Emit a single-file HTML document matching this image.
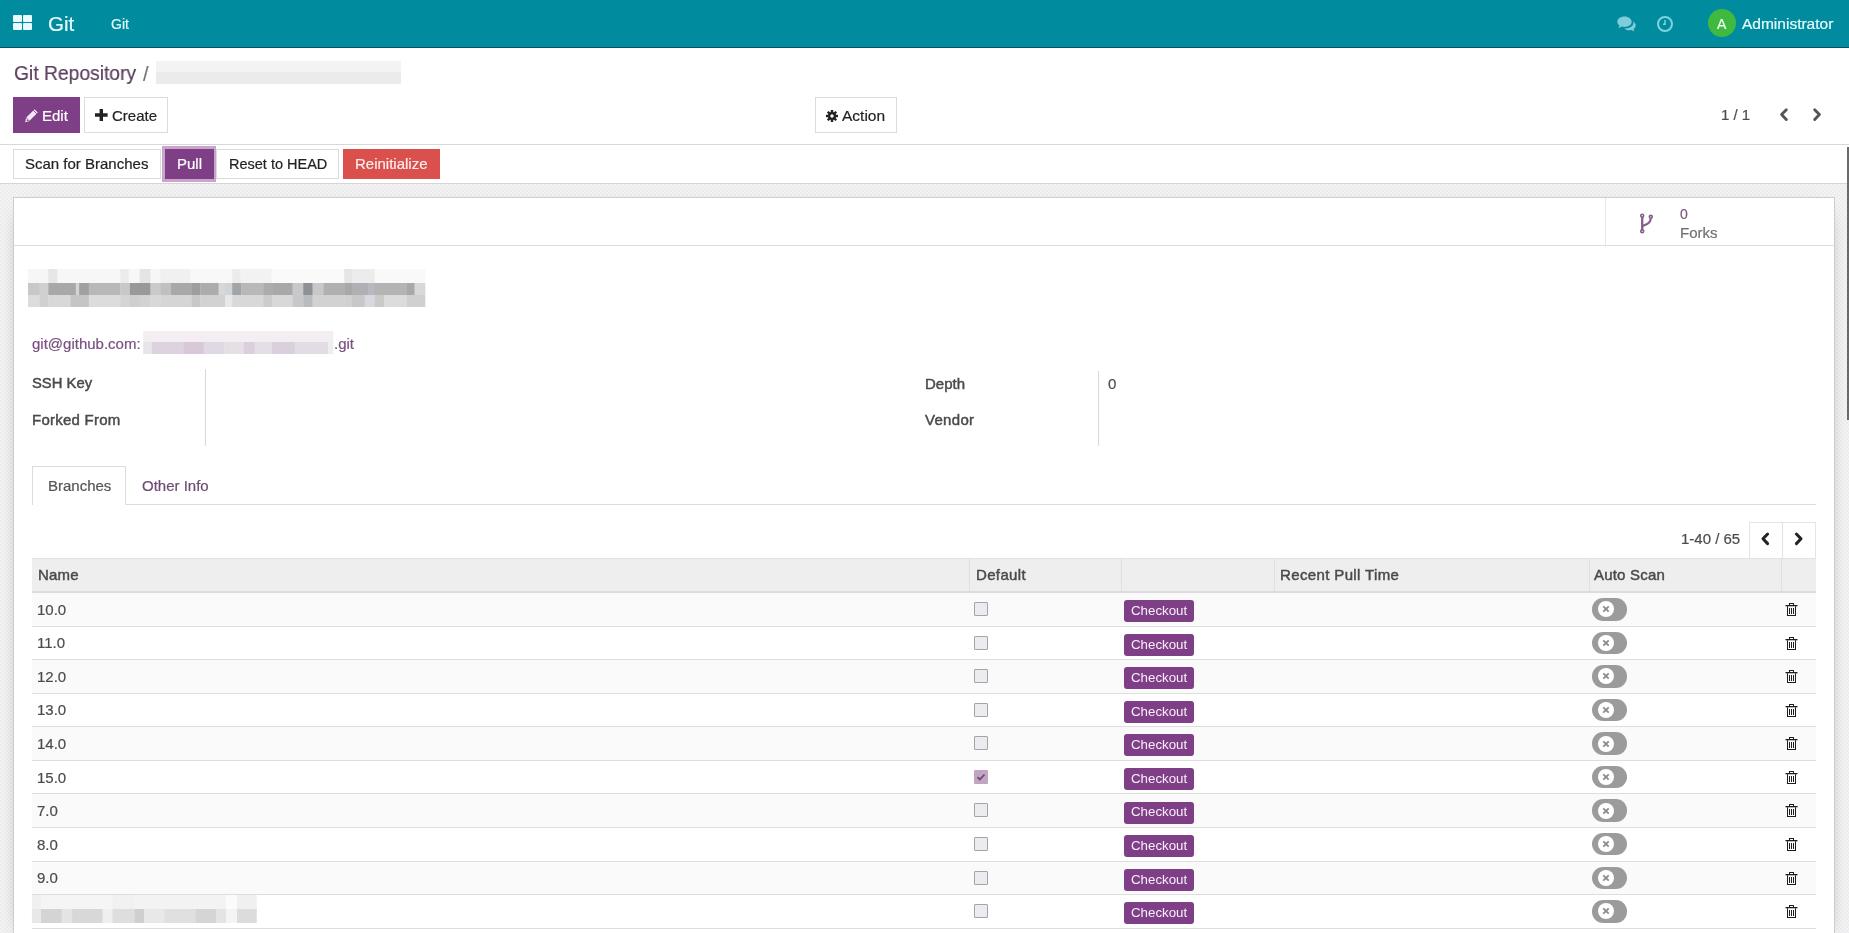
<!DOCTYPE html>
<html><head><meta charset="utf-8"><title>Git Repository</title>
<style>
html,body{margin:0;padding:0;width:1849px;height:933px;overflow:hidden;background:#fff;font-family:"Liberation Sans", sans-serif}
.t{position:absolute;white-space:nowrap;line-height:1;will-change:transform;-webkit-text-stroke:0.2px currentColor}
.r{position:absolute}
</style></head><body>
<div class="r" style="left:0px;top:0px;width:1849px;height:47px;background:#018b9e"></div>
<div class="r" style="left:0px;top:47px;width:1849px;height:1px;background:#05525e"></div>
<div class="r" style="left:13px;top:15px;width:8.5px;height:7px;background:#e9fbfd;border-radius:1px"></div>
<div class="r" style="left:23px;top:15px;width:8.5px;height:7px;background:#e9fbfd;border-radius:1px"></div>
<div class="r" style="left:13px;top:23px;width:8.5px;height:7px;background:#e9fbfd;border-radius:1px"></div>
<div class="r" style="left:23px;top:23px;width:8.5px;height:7px;background:#e9fbfd;border-radius:1px"></div>
<div class="t" style="left:48.20px;top:13.55px;font-size:20.5px;color:#e6fbfd;font-weight:400;">Git</div>
<div class="t" style="left:110.70px;top:16.95px;font-size:14px;color:#dff7fa;font-weight:400;">Git</div>
<svg class="r" style="left:1616px;top:15px" width="22" height="18" viewBox="0 0 22 18">
<path d="M8.5 1.5C4.4 1.5 1.3 3.9 1.3 6.8c0 1.5 0.8 2.8 2.1 3.8L2.6 13.2l3.2-1.6c0.9 0.3 1.8 0.4 2.7 0.4 4.1 0 7.2-2.4 7.2-5.2S12.6 1.5 8.5 1.5z" fill="#7fcdd8"/>
<path d="M17.2 6.2c0.2 0.4 0.3 0.9 0.3 1.4 0 3.3-3.6 5.9-8 5.9-0.4 0-0.8 0-1.2-0.1 1.2 1.1 3 1.8 5 1.8 0.8 0 1.5-0.1 2.2-0.3l2.8 1.5-0.7-2.4c1.3-0.9 2.1-2.2 2.1-3.6 0-1.6-1-3.1-2.5-4.2z" fill="#7fcdd8"/>
</svg>
<svg class="r" style="left:1656px;top:15px" width="18" height="18" viewBox="0 0 18 18">
<circle cx="9" cy="9" r="7" fill="none" stroke="#7fd3dd" stroke-width="2"/>
<path d="M9 5v4.2h-2" fill="none" stroke="#7fd3dd" stroke-width="1.5"/>
</svg>
<div class="r" style="left:1708px;top:9px;width:28px;height:28px;background:#3fb93f;border-radius:50%"></div>
<div class="t" style="left:1717.30px;top:16.75px;font-size:14px;color:#f0fff0;font-weight:400;">A</div>
<div class="t" style="left:1742.30px;top:16.08px;font-size:15.5px;color:#e6fbfd;font-weight:400;">Administrator</div>
<div class="t" style="left:13.60px;top:63.33px;font-size:20.4px;color:#5a3d5c;font-weight:400;transform:scaleX(0.945);transform-origin:0 0">Git Repository</div>
<div class="t" style="left:143.00px;top:63.67px;font-size:20px;color:#777;font-weight:400;">/</div>
<div class="r" style="left:156px;top:61px;width:245px;height:11px;background:#f3f3f4"></div>
<div class="r" style="left:156px;top:72px;width:245px;height:12px;background:#ebebec"></div>
<div class="r" style="left:13px;top:97px;width:67px;height:36px;background:#7f3f86"></div>
<svg class="r" style="left:24px;top:108px" width="15" height="15" viewBox="0 0 15 15">
<path d="M10.6 1.2l3.2 3.2-8.3 8.3-3.2-3.2z" fill="#f3e8f5"/><path d="M2 10.1l3.1 3.1-3.9 1z" fill="#f3e8f5"/>
<path d="M9.2 2.2l3.6 3.6" stroke="#7f3f86" stroke-width="0.9"/><circle cx="3.4" cy="12.6" r="0.7" fill="#6a4070"/>
</svg>
<div class="t" style="left:42.20px;top:108.10px;font-size:15px;color:#ffffff;font-weight:400;">Edit</div>
<div class="r" style="left:84px;top:97px;width:84px;height:36px;background:#fff;border:1px solid #dcdcdc;box-sizing:border-box"></div>
<svg class="r" style="left:95px;top:109px" width="13" height="12" viewBox="0 0 13 12">
<path d="M4.6 0h3.4v4.3h4.6v3.4h-4.6v4.3h-3.4v-4.3h-4.6v-3.4h4.6z" fill="#222"/>
</svg>
<div class="t" style="left:112.00px;top:108.10px;font-size:15px;color:#222;font-weight:400;">Create</div>
<div class="r" style="left:815px;top:97px;width:82px;height:36px;background:#fff;border:1px solid #dcdcdc;box-sizing:border-box"></div>
<svg class="r" style="left:826px;top:110px" width="12" height="12" viewBox="0 0 12 12">
<g fill="#222"><circle cx="6" cy="6" r="4"/>
<rect x="4.8" y="0" width="2.4" height="12"/><rect x="0" y="4.8" width="12" height="2.4"/>
<rect x="4.8" y="0" width="2.4" height="12" transform="rotate(45 6 6)"/><rect x="4.8" y="0" width="2.4" height="12" transform="rotate(-45 6 6)"/></g>
<circle cx="6" cy="6" r="1.7" fill="#fff"/>
</svg>
<div class="t" style="left:841.50px;top:108.28px;font-size:15.5px;color:#222;font-weight:400;">Action</div>
<div class="t" style="left:1721.00px;top:107.30px;font-size:15px;color:#4c4c4c;font-weight:400;">1 / 1</div>
<svg class="r" style="left:1778px;top:107px" width="12" height="16" viewBox="0 0 12 16">
<path d="M8.3 2.8L3.6 7.6l4.7 4.8" fill="none" stroke="#555" stroke-width="2.9" stroke-linecap="round" stroke-linejoin="round"/></svg>
<svg class="r" style="left:1811px;top:107px" width="12" height="16" viewBox="0 0 12 16">
<path d="M3.7 2.8l4.7 4.8-4.7 4.8" fill="none" stroke="#555" stroke-width="2.9" stroke-linecap="round" stroke-linejoin="round"/></svg>
<div class="r" style="left:0px;top:144px;width:1849px;height:1px;background:#d8d8d8"></div>
<div class="r" style="left:0px;top:183px;width:1849px;height:1px;background:#d6d6d6"></div>
<div class="r" style="left:13px;top:149px;width:148px;height:30px;background:#fff;border:1px solid #dcdcdc;box-sizing:border-box"></div>
<div class="t" style="left:24.90px;top:156.20px;font-size:15px;color:#222;font-weight:400;">Scan for Branches</div>
<div class="r" style="left:162px;top:146px;width:54px;height:36px;background:#c9a5cc"></div>
<div class="r" style="left:165px;top:149px;width:49px;height:30px;background:#7f3f86"></div>
<div class="t" style="left:176.50px;top:156.20px;font-size:15px;color:#fff;font-weight:400;">Pull</div>
<div class="r" style="left:216px;top:149px;width:123px;height:30px;background:#fff;border:1px solid #dcdcdc;box-sizing:border-box"></div>
<div class="t" style="left:228.90px;top:156.63px;font-size:14.5px;color:#222;font-weight:400;">Reset to HEAD</div>
<div class="r" style="left:343px;top:149px;width:97px;height:30px;background:#d9504c"></div>
<div class="t" style="left:355.30px;top:156.20px;font-size:15px;color:#fdeeee;font-weight:400;">Reinitialize</div>
<div class="r" style="left:0px;top:184px;width:1849px;height:749px;background:#f0f0f1;background-image:repeating-conic-gradient(#f4f4f5 0 25%,#ececee 0 50%);background-size:4px 4px"></div>
<div class="r" style="left:13px;top:197px;width:1822px;height:740px;background:#fff;border:1px solid #cdcdcd;box-sizing:border-box;box-shadow:0 5px 20px -15px #000"></div>
<div class="r" style="left:1847px;top:147px;width:2px;height:273px;background:#6a6a6a"></div>
<div class="r" style="left:14px;top:245px;width:1820px;height:1px;background:#dedede"></div>
<div class="r" style="left:1605px;top:198px;width:1px;height:47px;background:#e6e6e6"></div>
<svg class="r" style="left:1638px;top:212px" width="17" height="23" viewBox="0 0 17 23">
<g fill="none" stroke="#845f88"><circle cx="4.2" cy="3.7" r="1.45" stroke-width="1.6"/><circle cx="12.8" cy="4.8" r="1.45" stroke-width="1.6"/><circle cx="4.2" cy="19.3" r="1.45" stroke-width="1.6"/>
<path d="M4.2 5.2v12.6" stroke-width="2.3"/><path d="M12.8 6.3c0 3-1.6 4.8-4.6 6.2-2 0.9-3.4 1.2-3.8 1.8" stroke-width="2.1"/></g></svg>
<div class="t" style="left:1680.30px;top:206.85px;font-size:14px;color:#7d5a80;font-weight:400;">0</div>
<div class="t" style="left:1680.30px;top:224.90px;font-size:15px;color:#707070;font-weight:400;">Forks</div>
<svg class="r" style="left:28px;top:269px;overflow:visible" width="1" height="1">
<rect x="0.0" y="0" width="20.6" height="14" fill="#f6f6f6"/>
<rect x="20.3" y="0" width="9.4" height="14" fill="#e6e6e6"/>
<rect x="29.4" y="0" width="63.1" height="14" fill="#f7f7f7"/>
<rect x="92.2" y="0" width="8.9" height="14" fill="#ebebeb"/>
<rect x="100.8" y="0" width="11.2" height="14" fill="#f7f7f7"/>
<rect x="111.7" y="0" width="11.1" height="14" fill="#e4e4e4"/>
<rect x="122.5" y="0" width="10.0" height="14" fill="#f6f6f6"/>
<rect x="132.2" y="0" width="30.6" height="14" fill="#f0f0f0"/>
<rect x="162.5" y="0" width="42.0" height="14" fill="#f8f8f8"/>
<rect x="204.2" y="0" width="8.6" height="14" fill="#ececec"/>
<rect x="212.5" y="0" width="31.4" height="14" fill="#f2f2f2"/>
<rect x="243.6" y="0" width="72.9" height="14" fill="#fafafa"/>
<rect x="316.2" y="0" width="8.1" height="14" fill="#e5e5e5"/>
<rect x="324.0" y="0" width="23.0" height="14" fill="#ececec"/>
<rect x="346.7" y="0" width="50.6" height="14" fill="#f9f9f9"/>
<rect x="0.0" y="14" width="11.9" height="12" fill="#c8c8c8"/>
<rect x="11.6" y="14" width="9.0" height="12" fill="#d0d0d0"/>
<rect x="20.3" y="14" width="27.8" height="12" fill="#a8a8a8"/>
<rect x="47.8" y="14" width="3.6" height="12" fill="#d5d5d5"/>
<rect x="51.1" y="14" width="10.0" height="12" fill="#a0a0a0"/>
<rect x="60.8" y="14" width="31.7" height="12" fill="#b8b8b8"/>
<rect x="92.2" y="14" width="10.0" height="12" fill="#c8c8c8"/>
<rect x="101.9" y="14" width="20.9" height="12" fill="#999999"/>
<rect x="122.5" y="14" width="10.0" height="12" fill="#c8cacc"/>
<rect x="132.2" y="14" width="11.1" height="12" fill="#c0c0c0"/>
<rect x="143.0" y="14" width="20.9" height="12" fill="#a8a8a8"/>
<rect x="163.6" y="14" width="8.9" height="12" fill="#9e9e9e"/>
<rect x="172.2" y="14" width="18.7" height="12" fill="#acacac"/>
<rect x="190.6" y="14" width="6.7" height="12" fill="#d8d8d8"/>
<rect x="197.0" y="14" width="7.5" height="12" fill="#d0d4d6"/>
<rect x="204.2" y="14" width="9.2" height="12" fill="#a2a4a6"/>
<rect x="213.1" y="14" width="22.4" height="12" fill="#b8b8b8"/>
<rect x="235.2" y="14" width="9.2" height="12" fill="#acacac"/>
<rect x="244.1" y="14" width="20.8" height="12" fill="#a8a8a8"/>
<rect x="264.6" y="14" width="10.9" height="12" fill="#c8c8cc"/>
<rect x="275.2" y="14" width="9.7" height="12" fill="#8e9296"/>
<rect x="284.6" y="14" width="11.4" height="12" fill="#c8c8c8"/>
<rect x="295.7" y="14" width="20.8" height="12" fill="#b0b0b0"/>
<rect x="316.2" y="14" width="8.1" height="12" fill="#a8a8a8"/>
<rect x="324.0" y="14" width="16.3" height="12" fill="#b0b0b4"/>
<rect x="340.0" y="14" width="7.0" height="12" fill="#b8b8c0"/>
<rect x="346.7" y="14" width="32.4" height="12" fill="#b4b4b4"/>
<rect x="378.8" y="14" width="8.1" height="12" fill="#a8a8a8"/>
<rect x="386.6" y="14" width="10.7" height="12" fill="#d8d8d8"/>
<rect x="0.0" y="26" width="11.9" height="12" fill="#dcdcdc"/>
<rect x="11.6" y="26" width="9.0" height="12" fill="#d0d0d0"/>
<rect x="20.3" y="26" width="22.4" height="12" fill="#d8d8d8"/>
<rect x="42.4" y="26" width="18.7" height="12" fill="#c5c5c5"/>
<rect x="60.8" y="26" width="31.7" height="12" fill="#dcdcdc"/>
<rect x="92.2" y="26" width="10.0" height="12" fill="#d4d4d4"/>
<rect x="101.9" y="26" width="10.1" height="12" fill="#cfcfcf"/>
<rect x="111.7" y="26" width="11.1" height="12" fill="#d2d2d2"/>
<rect x="122.5" y="26" width="10.0" height="12" fill="#d8d8d8"/>
<rect x="132.2" y="26" width="31.7" height="12" fill="#d5d5d5"/>
<rect x="163.6" y="26" width="8.9" height="12" fill="#c8c8c8"/>
<rect x="172.2" y="26" width="25.1" height="12" fill="#d2d2d2"/>
<rect x="197.0" y="26" width="7.5" height="12" fill="#e8e8e8"/>
<rect x="204.2" y="26" width="31.3" height="12" fill="#d8d8d8"/>
<rect x="235.2" y="26" width="9.2" height="12" fill="#cccccc"/>
<rect x="244.1" y="26" width="20.8" height="12" fill="#d8d8d8"/>
<rect x="264.6" y="26" width="10.9" height="12" fill="#c8c8c8"/>
<rect x="275.2" y="26" width="9.7" height="12" fill="#b8bcc0"/>
<rect x="284.6" y="26" width="31.9" height="12" fill="#d2d2d2"/>
<rect x="316.2" y="26" width="8.1" height="12" fill="#d0d0d0"/>
<rect x="324.0" y="26" width="13.0" height="12" fill="#c8c8c8"/>
<rect x="336.7" y="26" width="10.3" height="12" fill="#d8d8e0"/>
<rect x="346.7" y="26" width="9.7" height="12" fill="#cacaca"/>
<rect x="356.1" y="26" width="23.0" height="12" fill="#dcdcdc"/>
<rect x="378.8" y="26" width="18.5" height="12" fill="#d0d0d0"/>
</svg>
<div class="t" style="left:32.20px;top:335.90px;font-size:15px;color:#7a5080;font-weight:400;">git@github.com:</div>
<svg class="r" style="left:143px;top:331px;overflow:visible" width="1" height="1">
<rect x="0.2" y="0" width="190.1" height="11" fill="#f2eef2"/>
<rect x="0.2" y="11" width="9.0" height="12" fill="#e8e4e8"/>
<rect x="8.9" y="11" width="32.2" height="12" fill="#ddd3df"/>
<rect x="40.8" y="11" width="20.3" height="12" fill="#d8c8d8"/>
<rect x="60.8" y="11" width="20.9" height="12" fill="#e0d8e2"/>
<rect x="81.4" y="11" width="19.7" height="12" fill="#e6e0e6"/>
<rect x="100.8" y="11" width="11.2" height="12" fill="#dccfdd"/>
<rect x="111.7" y="11" width="17.6" height="12" fill="#e4dee6"/>
<rect x="129.0" y="11" width="23.0" height="12" fill="#dacfdc"/>
<rect x="151.7" y="11" width="33.8" height="12" fill="#e2dce4"/>
<rect x="185.2" y="11" width="5.1" height="12" fill="#eeeeee"/>
</svg>
<div class="t" style="left:333.50px;top:335.90px;font-size:15px;color:#7a5080;font-weight:400;">.git</div>
<div class="t" style="left:32.20px;top:376.37px;font-size:14.8px;color:#4a4a4a;font-weight:400;-webkit-text-stroke:0.45px currentColor;">SSH Key</div>
<div class="t" style="left:32.20px;top:412.20px;font-size:15px;color:#4a4a4a;font-weight:400;-webkit-text-stroke:0.45px currentColor;letter-spacing:0.25px">Forked From</div>
<div class="r" style="left:205px;top:369px;width:1px;height:77px;background:#d9d9d9"></div>
<div class="t" style="left:924.50px;top:376.10px;font-size:15px;color:#4a4a4a;font-weight:400;-webkit-text-stroke:0.45px currentColor;">Depth</div>
<div class="t" style="left:924.50px;top:412.20px;font-size:15px;color:#4a4a4a;font-weight:400;-webkit-text-stroke:0.45px currentColor;letter-spacing:0.3px">Vendor</div>
<div class="r" style="left:1098px;top:371px;width:1px;height:75px;background:#d9d9d9"></div>
<div class="t" style="left:1107.50px;top:376.10px;font-size:15px;color:#4c4c4c;font-weight:400;">0</div>
<div class="r" style="left:32px;top:504px;width:1784px;height:1px;background:#dcdcdc"></div>
<div class="r" style="left:32px;top:466px;width:94px;height:39px;background:#fff;border:1px solid #dcdcdc;border-bottom:none;box-sizing:border-box"></div>
<div class="t" style="left:47.60px;top:478.00px;font-size:15px;color:#555;font-weight:400;">Branches</div>
<div class="t" style="left:141.60px;top:478.00px;font-size:15px;color:#6e4a72;font-weight:400;">Other Info</div>
<div class="t" style="left:1681.00px;top:531.40px;font-size:15px;color:#4c4c4c;font-weight:400;">1-40 / 65</div>
<div class="r" style="left:1749px;top:522px;width:67px;height:36px;background:#fff;border:1px solid #e4e4e4;border-bottom:none;box-sizing:border-box"></div>
<div class="r" style="left:1782px;top:522px;width:1px;height:36px;background:#e2e2e2"></div>
<svg class="r" style="left:1758px;top:531px" width="14" height="16" viewBox="0 0 14 16">
<path d="M9.6 3L5 7.8l4.6 4.8" fill="none" stroke="#222" stroke-width="3" stroke-linecap="round" stroke-linejoin="round"/></svg>
<svg class="r" style="left:1792px;top:531px" width="14" height="16" viewBox="0 0 14 16">
<path d="M4.4 3L9 7.8l-4.6 4.8" fill="none" stroke="#222" stroke-width="3" stroke-linecap="round" stroke-linejoin="round"/></svg>
<div class="r" style="left:32px;top:558px;width:1784px;height:33px;background:#eeeeee"></div>
<div class="r" style="left:32px;top:557.5px;width:1784px;height:1px;background:#e2e2e2"></div>
<div class="r" style="left:32px;top:591px;width:1784px;height:2px;background:#dcdcdc"></div>
<div class="r" style="left:968.5px;top:558px;width:1px;height:33px;background:#e0e0e0"></div>
<div class="r" style="left:1120.5px;top:558px;width:1px;height:33px;background:#e0e0e0"></div>
<div class="r" style="left:1273.5px;top:558px;width:1px;height:33px;background:#e0e0e0"></div>
<div class="r" style="left:1588.5px;top:558px;width:1px;height:33px;background:#e0e0e0"></div>
<div class="r" style="left:1781px;top:558px;width:1px;height:33px;background:#e0e0e0"></div>
<div class="t" style="left:38.00px;top:567.30px;font-size:15px;color:#4a4a4a;font-weight:400;-webkit-text-stroke:0.45px currentColor;letter-spacing:0.2px">Name</div>
<div class="t" style="left:975.60px;top:567.30px;font-size:15px;color:#4a4a4a;font-weight:400;-webkit-text-stroke:0.45px currentColor;letter-spacing:0.35px">Default</div>
<div class="t" style="left:1279.90px;top:567.30px;font-size:15px;color:#4a4a4a;font-weight:400;-webkit-text-stroke:0.45px currentColor;letter-spacing:0.37px">Recent Pull Time</div>
<div class="t" style="left:1593.80px;top:567.30px;font-size:15px;color:#4a4a4a;font-weight:400;-webkit-text-stroke:0.45px currentColor;letter-spacing:0.2px">Auto Scan</div>
<div class="r" style="left:32px;top:593.0px;width:1784px;height:32.57px;background:#fafafa"></div>
<div class="r" style="left:32px;top:625.57px;width:1784px;height:1px;background:#dedede"></div>
<div class="t" style="left:37.40px;top:601.70px;font-size:15px;color:#4c4c4c;font-weight:400;">10.0</div>
<div class="r" style="left:974px;top:602.0px;width:14px;height:14px;background:#ebebf0;border:1px solid #a4a4a8;box-sizing:border-box;border-radius:1px"></div>
<div class="r" style="left:1124px;top:600.2px;width:70px;height:22px;background:#7f3f86;border-radius:3px"></div>
<div class="t" style="left:1130.80px;top:604.04px;font-size:13.3px;color:#fbeefc;font-weight:400;-webkit-text-stroke:0">Checkout</div>
<div class="r" style="left:1592px;top:598.0px;width:35px;height:22.5px;background:#9b9b9b;border-radius:11.25px"></div>
<div class="r" style="left:1598.2px;top:601.3px;width:16px;height:16px;background:#fff;border-radius:50%"></div>
<svg class="r" style="left:1601.2px;top:604.30px" width="10" height="10" viewBox="0 0 10 10"><path d="M2.3 2.3l5.4 5.4M7.7 2.3l-5.4 5.4" stroke="#8c8c8c" stroke-width="1.9"/></svg>
<svg class="r" style="left:1785px;top:603px" width="13" height="13" viewBox="0 0 13 13">
<g fill="#1e1e1e"><rect x="4" y="0" width="5" height="1"/><rect x="4" y="0" width="1" height="2"/><rect x="8" y="0" width="1" height="2"/>
<rect x="0.5" y="2" width="12" height="1.3"/>
<rect x="2" y="3.3" width="1" height="9.7"/><rect x="10" y="3.3" width="1" height="9.7"/><rect x="2" y="12" width="9" height="1"/>
<rect x="4" y="5" width="1" height="6"/><rect x="6" y="5" width="1" height="6"/><rect x="8" y="5" width="1" height="6"/></g></svg>
<div class="r" style="left:32px;top:626.57px;width:1784px;height:32.57px;background:#ffffff"></div>
<div class="r" style="left:32px;top:659.14px;width:1784px;height:1px;background:#dedede"></div>
<div class="t" style="left:37.40px;top:635.27px;font-size:15px;color:#4c4c4c;font-weight:400;">11.0</div>
<div class="r" style="left:974px;top:635.57px;width:14px;height:14px;background:#ebebf0;border:1px solid #a4a4a8;box-sizing:border-box;border-radius:1px"></div>
<div class="r" style="left:1124px;top:633.77px;width:70px;height:22px;background:#7f3f86;border-radius:3px"></div>
<div class="t" style="left:1130.80px;top:637.61px;font-size:13.3px;color:#fbeefc;font-weight:400;-webkit-text-stroke:0">Checkout</div>
<div class="r" style="left:1592px;top:631.57px;width:35px;height:22.5px;background:#9b9b9b;border-radius:11.25px"></div>
<div class="r" style="left:1598.2px;top:634.87px;width:16px;height:16px;background:#fff;border-radius:50%"></div>
<svg class="r" style="left:1601.2px;top:637.87px" width="10" height="10" viewBox="0 0 10 10"><path d="M2.3 2.3l5.4 5.4M7.7 2.3l-5.4 5.4" stroke="#8c8c8c" stroke-width="1.9"/></svg>
<svg class="r" style="left:1785px;top:637px" width="13" height="13" viewBox="0 0 13 13">
<g fill="#1e1e1e"><rect x="4" y="0" width="5" height="1"/><rect x="4" y="0" width="1" height="2"/><rect x="8" y="0" width="1" height="2"/>
<rect x="0.5" y="2" width="12" height="1.3"/>
<rect x="2" y="3.3" width="1" height="9.7"/><rect x="10" y="3.3" width="1" height="9.7"/><rect x="2" y="12" width="9" height="1"/>
<rect x="4" y="5" width="1" height="6"/><rect x="6" y="5" width="1" height="6"/><rect x="8" y="5" width="1" height="6"/></g></svg>
<div class="r" style="left:32px;top:660.14px;width:1784px;height:32.57px;background:#fafafa"></div>
<div class="r" style="left:32px;top:692.71px;width:1784px;height:1px;background:#dedede"></div>
<div class="t" style="left:37.40px;top:668.84px;font-size:15px;color:#4c4c4c;font-weight:400;">12.0</div>
<div class="r" style="left:974px;top:669.14px;width:14px;height:14px;background:#ebebf0;border:1px solid #a4a4a8;box-sizing:border-box;border-radius:1px"></div>
<div class="r" style="left:1124px;top:667.34px;width:70px;height:22px;background:#7f3f86;border-radius:3px"></div>
<div class="t" style="left:1130.80px;top:671.18px;font-size:13.3px;color:#fbeefc;font-weight:400;-webkit-text-stroke:0">Checkout</div>
<div class="r" style="left:1592px;top:665.14px;width:35px;height:22.5px;background:#9b9b9b;border-radius:11.25px"></div>
<div class="r" style="left:1598.2px;top:668.44px;width:16px;height:16px;background:#fff;border-radius:50%"></div>
<svg class="r" style="left:1601.2px;top:671.44px" width="10" height="10" viewBox="0 0 10 10"><path d="M2.3 2.3l5.4 5.4M7.7 2.3l-5.4 5.4" stroke="#8c8c8c" stroke-width="1.9"/></svg>
<svg class="r" style="left:1785px;top:670px" width="13" height="13" viewBox="0 0 13 13">
<g fill="#1e1e1e"><rect x="4" y="0" width="5" height="1"/><rect x="4" y="0" width="1" height="2"/><rect x="8" y="0" width="1" height="2"/>
<rect x="0.5" y="2" width="12" height="1.3"/>
<rect x="2" y="3.3" width="1" height="9.7"/><rect x="10" y="3.3" width="1" height="9.7"/><rect x="2" y="12" width="9" height="1"/>
<rect x="4" y="5" width="1" height="6"/><rect x="6" y="5" width="1" height="6"/><rect x="8" y="5" width="1" height="6"/></g></svg>
<div class="r" style="left:32px;top:693.71px;width:1784px;height:32.57px;background:#ffffff"></div>
<div class="r" style="left:32px;top:726.28px;width:1784px;height:1px;background:#dedede"></div>
<div class="t" style="left:37.40px;top:702.41px;font-size:15px;color:#4c4c4c;font-weight:400;">13.0</div>
<div class="r" style="left:974px;top:702.71px;width:14px;height:14px;background:#ebebf0;border:1px solid #a4a4a8;box-sizing:border-box;border-radius:1px"></div>
<div class="r" style="left:1124px;top:700.91px;width:70px;height:22px;background:#7f3f86;border-radius:3px"></div>
<div class="t" style="left:1130.80px;top:704.75px;font-size:13.3px;color:#fbeefc;font-weight:400;-webkit-text-stroke:0">Checkout</div>
<div class="r" style="left:1592px;top:698.71px;width:35px;height:22.5px;background:#9b9b9b;border-radius:11.25px"></div>
<div class="r" style="left:1598.2px;top:702.01px;width:16px;height:16px;background:#fff;border-radius:50%"></div>
<svg class="r" style="left:1601.2px;top:705.01px" width="10" height="10" viewBox="0 0 10 10"><path d="M2.3 2.3l5.4 5.4M7.7 2.3l-5.4 5.4" stroke="#8c8c8c" stroke-width="1.9"/></svg>
<svg class="r" style="left:1785px;top:704px" width="13" height="13" viewBox="0 0 13 13">
<g fill="#1e1e1e"><rect x="4" y="0" width="5" height="1"/><rect x="4" y="0" width="1" height="2"/><rect x="8" y="0" width="1" height="2"/>
<rect x="0.5" y="2" width="12" height="1.3"/>
<rect x="2" y="3.3" width="1" height="9.7"/><rect x="10" y="3.3" width="1" height="9.7"/><rect x="2" y="12" width="9" height="1"/>
<rect x="4" y="5" width="1" height="6"/><rect x="6" y="5" width="1" height="6"/><rect x="8" y="5" width="1" height="6"/></g></svg>
<div class="r" style="left:32px;top:727.28px;width:1784px;height:32.57px;background:#fafafa"></div>
<div class="r" style="left:32px;top:759.85px;width:1784px;height:1px;background:#dedede"></div>
<div class="t" style="left:37.40px;top:735.98px;font-size:15px;color:#4c4c4c;font-weight:400;">14.0</div>
<div class="r" style="left:974px;top:736.28px;width:14px;height:14px;background:#ebebf0;border:1px solid #a4a4a8;box-sizing:border-box;border-radius:1px"></div>
<div class="r" style="left:1124px;top:734.48px;width:70px;height:22px;background:#7f3f86;border-radius:3px"></div>
<div class="t" style="left:1130.80px;top:738.32px;font-size:13.3px;color:#fbeefc;font-weight:400;-webkit-text-stroke:0">Checkout</div>
<div class="r" style="left:1592px;top:732.28px;width:35px;height:22.5px;background:#9b9b9b;border-radius:11.25px"></div>
<div class="r" style="left:1598.2px;top:735.58px;width:16px;height:16px;background:#fff;border-radius:50%"></div>
<svg class="r" style="left:1601.2px;top:738.58px" width="10" height="10" viewBox="0 0 10 10"><path d="M2.3 2.3l5.4 5.4M7.7 2.3l-5.4 5.4" stroke="#8c8c8c" stroke-width="1.9"/></svg>
<svg class="r" style="left:1785px;top:737px" width="13" height="13" viewBox="0 0 13 13">
<g fill="#1e1e1e"><rect x="4" y="0" width="5" height="1"/><rect x="4" y="0" width="1" height="2"/><rect x="8" y="0" width="1" height="2"/>
<rect x="0.5" y="2" width="12" height="1.3"/>
<rect x="2" y="3.3" width="1" height="9.7"/><rect x="10" y="3.3" width="1" height="9.7"/><rect x="2" y="12" width="9" height="1"/>
<rect x="4" y="5" width="1" height="6"/><rect x="6" y="5" width="1" height="6"/><rect x="8" y="5" width="1" height="6"/></g></svg>
<div class="r" style="left:32px;top:760.85px;width:1784px;height:32.57px;background:#ffffff"></div>
<div class="r" style="left:32px;top:793.42px;width:1784px;height:1px;background:#dedede"></div>
<div class="t" style="left:37.40px;top:769.55px;font-size:15px;color:#4c4c4c;font-weight:400;">15.0</div>
<div class="r" style="left:974px;top:769.85px;width:14px;height:14px;background:#c2a4c5;border-radius:1px"></div>
<svg class="r" style="left:976px;top:771.85px" width="10" height="10" viewBox="0 0 10 10"><path d="M1.5 5.2l2.3 2.3 4.7-5" fill="none" stroke="#6b4a6e" stroke-width="1.8"/></svg>
<div class="r" style="left:1124px;top:768.05px;width:70px;height:22px;background:#7f3f86;border-radius:3px"></div>
<div class="t" style="left:1130.80px;top:771.89px;font-size:13.3px;color:#fbeefc;font-weight:400;-webkit-text-stroke:0">Checkout</div>
<div class="r" style="left:1592px;top:765.85px;width:35px;height:22.5px;background:#9b9b9b;border-radius:11.25px"></div>
<div class="r" style="left:1598.2px;top:769.15px;width:16px;height:16px;background:#fff;border-radius:50%"></div>
<svg class="r" style="left:1601.2px;top:772.15px" width="10" height="10" viewBox="0 0 10 10"><path d="M2.3 2.3l5.4 5.4M7.7 2.3l-5.4 5.4" stroke="#8c8c8c" stroke-width="1.9"/></svg>
<svg class="r" style="left:1785px;top:771px" width="13" height="13" viewBox="0 0 13 13">
<g fill="#1e1e1e"><rect x="4" y="0" width="5" height="1"/><rect x="4" y="0" width="1" height="2"/><rect x="8" y="0" width="1" height="2"/>
<rect x="0.5" y="2" width="12" height="1.3"/>
<rect x="2" y="3.3" width="1" height="9.7"/><rect x="10" y="3.3" width="1" height="9.7"/><rect x="2" y="12" width="9" height="1"/>
<rect x="4" y="5" width="1" height="6"/><rect x="6" y="5" width="1" height="6"/><rect x="8" y="5" width="1" height="6"/></g></svg>
<div class="r" style="left:32px;top:794.42px;width:1784px;height:32.57px;background:#fafafa"></div>
<div class="r" style="left:32px;top:826.99px;width:1784px;height:1px;background:#dedede"></div>
<div class="t" style="left:37.40px;top:803.12px;font-size:15px;color:#4c4c4c;font-weight:400;">7.0</div>
<div class="r" style="left:974px;top:803.42px;width:14px;height:14px;background:#ebebf0;border:1px solid #a4a4a8;box-sizing:border-box;border-radius:1px"></div>
<div class="r" style="left:1124px;top:801.62px;width:70px;height:22px;background:#7f3f86;border-radius:3px"></div>
<div class="t" style="left:1130.80px;top:805.46px;font-size:13.3px;color:#fbeefc;font-weight:400;-webkit-text-stroke:0">Checkout</div>
<div class="r" style="left:1592px;top:799.42px;width:35px;height:22.5px;background:#9b9b9b;border-radius:11.25px"></div>
<div class="r" style="left:1598.2px;top:802.72px;width:16px;height:16px;background:#fff;border-radius:50%"></div>
<svg class="r" style="left:1601.2px;top:805.72px" width="10" height="10" viewBox="0 0 10 10"><path d="M2.3 2.3l5.4 5.4M7.7 2.3l-5.4 5.4" stroke="#8c8c8c" stroke-width="1.9"/></svg>
<svg class="r" style="left:1785px;top:804px" width="13" height="13" viewBox="0 0 13 13">
<g fill="#1e1e1e"><rect x="4" y="0" width="5" height="1"/><rect x="4" y="0" width="1" height="2"/><rect x="8" y="0" width="1" height="2"/>
<rect x="0.5" y="2" width="12" height="1.3"/>
<rect x="2" y="3.3" width="1" height="9.7"/><rect x="10" y="3.3" width="1" height="9.7"/><rect x="2" y="12" width="9" height="1"/>
<rect x="4" y="5" width="1" height="6"/><rect x="6" y="5" width="1" height="6"/><rect x="8" y="5" width="1" height="6"/></g></svg>
<div class="r" style="left:32px;top:827.99px;width:1784px;height:32.57px;background:#ffffff"></div>
<div class="r" style="left:32px;top:860.56px;width:1784px;height:1px;background:#dedede"></div>
<div class="t" style="left:37.40px;top:836.69px;font-size:15px;color:#4c4c4c;font-weight:400;">8.0</div>
<div class="r" style="left:974px;top:836.99px;width:14px;height:14px;background:#ebebf0;border:1px solid #a4a4a8;box-sizing:border-box;border-radius:1px"></div>
<div class="r" style="left:1124px;top:835.19px;width:70px;height:22px;background:#7f3f86;border-radius:3px"></div>
<div class="t" style="left:1130.80px;top:839.03px;font-size:13.3px;color:#fbeefc;font-weight:400;-webkit-text-stroke:0">Checkout</div>
<div class="r" style="left:1592px;top:832.99px;width:35px;height:22.5px;background:#9b9b9b;border-radius:11.25px"></div>
<div class="r" style="left:1598.2px;top:836.29px;width:16px;height:16px;background:#fff;border-radius:50%"></div>
<svg class="r" style="left:1601.2px;top:839.29px" width="10" height="10" viewBox="0 0 10 10"><path d="M2.3 2.3l5.4 5.4M7.7 2.3l-5.4 5.4" stroke="#8c8c8c" stroke-width="1.9"/></svg>
<svg class="r" style="left:1785px;top:838px" width="13" height="13" viewBox="0 0 13 13">
<g fill="#1e1e1e"><rect x="4" y="0" width="5" height="1"/><rect x="4" y="0" width="1" height="2"/><rect x="8" y="0" width="1" height="2"/>
<rect x="0.5" y="2" width="12" height="1.3"/>
<rect x="2" y="3.3" width="1" height="9.7"/><rect x="10" y="3.3" width="1" height="9.7"/><rect x="2" y="12" width="9" height="1"/>
<rect x="4" y="5" width="1" height="6"/><rect x="6" y="5" width="1" height="6"/><rect x="8" y="5" width="1" height="6"/></g></svg>
<div class="r" style="left:32px;top:861.56px;width:1784px;height:32.57px;background:#fafafa"></div>
<div class="r" style="left:32px;top:894.13px;width:1784px;height:1px;background:#dedede"></div>
<div class="t" style="left:37.40px;top:870.26px;font-size:15px;color:#4c4c4c;font-weight:400;">9.0</div>
<div class="r" style="left:974px;top:870.56px;width:14px;height:14px;background:#ebebf0;border:1px solid #a4a4a8;box-sizing:border-box;border-radius:1px"></div>
<div class="r" style="left:1124px;top:868.76px;width:70px;height:22px;background:#7f3f86;border-radius:3px"></div>
<div class="t" style="left:1130.80px;top:872.60px;font-size:13.3px;color:#fbeefc;font-weight:400;-webkit-text-stroke:0">Checkout</div>
<div class="r" style="left:1592px;top:866.56px;width:35px;height:22.5px;background:#9b9b9b;border-radius:11.25px"></div>
<div class="r" style="left:1598.2px;top:869.86px;width:16px;height:16px;background:#fff;border-radius:50%"></div>
<svg class="r" style="left:1601.2px;top:872.86px" width="10" height="10" viewBox="0 0 10 10"><path d="M2.3 2.3l5.4 5.4M7.7 2.3l-5.4 5.4" stroke="#8c8c8c" stroke-width="1.9"/></svg>
<svg class="r" style="left:1785px;top:872px" width="13" height="13" viewBox="0 0 13 13">
<g fill="#1e1e1e"><rect x="4" y="0" width="5" height="1"/><rect x="4" y="0" width="1" height="2"/><rect x="8" y="0" width="1" height="2"/>
<rect x="0.5" y="2" width="12" height="1.3"/>
<rect x="2" y="3.3" width="1" height="9.7"/><rect x="10" y="3.3" width="1" height="9.7"/><rect x="2" y="12" width="9" height="1"/>
<rect x="4" y="5" width="1" height="6"/><rect x="6" y="5" width="1" height="6"/><rect x="8" y="5" width="1" height="6"/></g></svg>
<div class="r" style="left:32px;top:895.13px;width:1784px;height:32.57px;background:#ffffff"></div>
<div class="r" style="left:32px;top:927.7px;width:1784px;height:1px;background:#dedede"></div>
<svg class="r" style="left:32px;top:895px;overflow:visible" width="1" height="1">
<rect x="-0.1" y="0" width="9.4" height="14" fill="#f0f0f0"/>
<rect x="9.0" y="0" width="71.7" height="14" fill="#f5f5f5"/>
<rect x="80.4" y="0" width="22.3" height="14" fill="#f1f1f1"/>
<rect x="102.4" y="0" width="91.9" height="14" fill="#f3f3f3"/>
<rect x="194.0" y="0" width="11.3" height="14" fill="#fbfbfb"/>
<rect x="205.0" y="0" width="19.8" height="14" fill="#f0f0f0"/>
<rect x="-0.1" y="14" width="9.4" height="14" fill="#e8e8e8"/>
<rect x="9.0" y="14" width="21.0" height="14" fill="#d4d4d4"/>
<rect x="29.7" y="14" width="10.7" height="14" fill="#e4e4e4"/>
<rect x="40.1" y="14" width="30.8" height="14" fill="#d8d8d8"/>
<rect x="70.6" y="14" width="10.1" height="14" fill="#efefef"/>
<rect x="80.4" y="14" width="22.3" height="14" fill="#dedede"/>
<rect x="102.4" y="14" width="10.1" height="14" fill="#cfcfcf"/>
<rect x="112.2" y="14" width="20.4" height="14" fill="#e8e8e8"/>
<rect x="132.3" y="14" width="31.4" height="14" fill="#e0e0e0"/>
<rect x="163.4" y="14" width="21.1" height="14" fill="#d5d5d5"/>
<rect x="184.2" y="14" width="10.1" height="14" fill="#e4e4e4"/>
<rect x="194.0" y="14" width="11.3" height="14" fill="#f4f4f4"/>
<rect x="205.0" y="14" width="19.8" height="14" fill="#dcdcdc"/>
</svg>
<div class="r" style="left:974px;top:904.13px;width:14px;height:14px;background:#ebebf0;border:1px solid #a4a4a8;box-sizing:border-box;border-radius:1px"></div>
<div class="r" style="left:1124px;top:902.33px;width:70px;height:22px;background:#7f3f86;border-radius:3px"></div>
<div class="t" style="left:1130.80px;top:906.17px;font-size:13.3px;color:#fbeefc;font-weight:400;-webkit-text-stroke:0">Checkout</div>
<div class="r" style="left:1592px;top:900.13px;width:35px;height:22.5px;background:#9b9b9b;border-radius:11.25px"></div>
<div class="r" style="left:1598.2px;top:903.43px;width:16px;height:16px;background:#fff;border-radius:50%"></div>
<svg class="r" style="left:1601.2px;top:906.43px" width="10" height="10" viewBox="0 0 10 10"><path d="M2.3 2.3l5.4 5.4M7.7 2.3l-5.4 5.4" stroke="#8c8c8c" stroke-width="1.9"/></svg>
<svg class="r" style="left:1785px;top:905px" width="13" height="13" viewBox="0 0 13 13">
<g fill="#1e1e1e"><rect x="4" y="0" width="5" height="1"/><rect x="4" y="0" width="1" height="2"/><rect x="8" y="0" width="1" height="2"/>
<rect x="0.5" y="2" width="12" height="1.3"/>
<rect x="2" y="3.3" width="1" height="9.7"/><rect x="10" y="3.3" width="1" height="9.7"/><rect x="2" y="12" width="9" height="1"/>
<rect x="4" y="5" width="1" height="6"/><rect x="6" y="5" width="1" height="6"/><rect x="8" y="5" width="1" height="6"/></g></svg>
</body></html>
